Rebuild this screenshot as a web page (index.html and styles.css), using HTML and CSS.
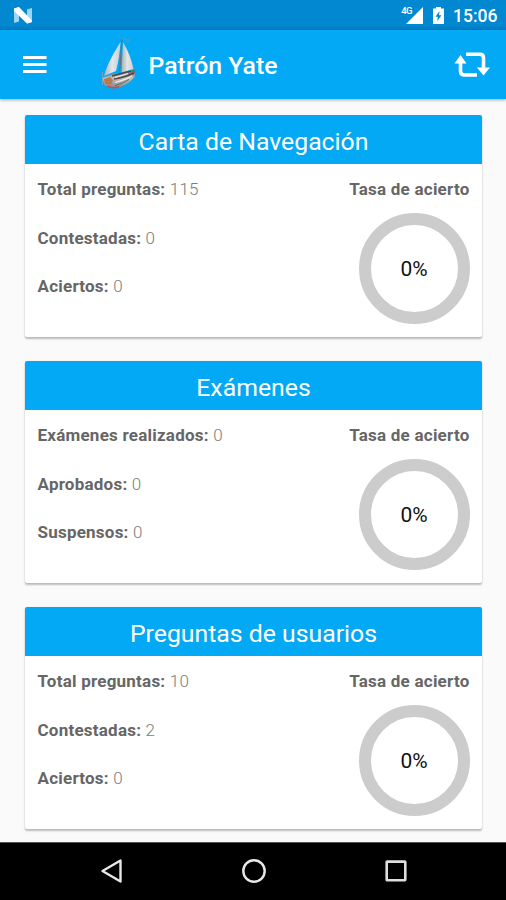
FILE: index.html
```
<!DOCTYPE html>
<html lang="es">
<head>
<meta charset="utf-8">
<title>Patrón Yate</title>
<link rel="stylesheet" href="styles.css">
</head>
<body>
<div class="screen">
  <header class="status-bar">
    <svg class="n-logo" width="20" height="17" viewBox="0 0 20 17"><path d="M1 1.500L6 0v14.500L1 16zM14 2.500L19 1v14l-5 1.500z" fill="#9fd4f4"/><path d="M1 1.500L6 0l13 13.500v1.500L14 16.500 1 4z" fill="#fff"/></svg>
    <div class="status-icons">
      <span class="network">4G</span>
      <svg class="signal" width="17" height="17" viewBox="0 0 17 17"><path d="M17 0v17H0z" fill="#fff"/></svg>
      <svg class="battery" width="11" height="17" viewBox="0 0 11 17"><path d="M3 0h5v1.500H11V17H0V1.500h3z" fill="#fff"/><path d="M6.500 4L2.500 9.700h2.300L4.300 14 8.500 8.200H6z" fill="#0288d1"/></svg>
      <span class="clock">15:06</span>
    </div>
  </header>
  <div class="app-bar">
    <svg class="menu" width="24" height="18" viewBox="0 0 24 18"><path d="M0 1.500h23.500M0 8.500h23.500M0 15.500h23.500" stroke="#fff" stroke-width="2.800"/></svg>
    <svg class="boat" width="36" height="54" viewBox="0 0 36 54">
      <defs>
        <linearGradient id="sail" x1="0" y1="0" x2="1" y2="0"><stop offset="0" stop-color="#a3b2bc"/><stop offset=".5" stop-color="#e4e7e8"/><stop offset="1" stop-color="#c8ced3"/></linearGradient>
        <linearGradient id="hull" x1="0" y1="0" x2="0" y2="1"><stop offset="0" stop-color="#5b5553"/><stop offset=".45" stop-color="#c4c1be"/><stop offset="1" stop-color="#85878c"/></linearGradient>
      </defs>
      <path d="M19.500 5C14 14 6 27 3 39l12-5q3.500-13 4.500-29z" fill="url(#sail)"/>
      <path d="M22 5q8 14 10.500 27l-12 3.500z" fill="url(#sail)"/>
      <path d="M21 2L18.500 37" stroke="#66747b" stroke-width="1.200"/>
      <path d="M21 1.500l4 1.500 3-.8v2l-4 .3" fill="none" stroke="#78919b" stroke-width=".9"/>
      <path d="M1.500 41l10-4 7 1 15-5q2 5-1 8-5 6-14 9.500-9 1.500-15-2.500z" fill="url(#hull)"/>
      <path d="M3 42l6-2 3 3-2 5-6-1z" fill="#b77852"/>
      <path d="M11 39l19-5M13 42q12-2 20-6" fill="none" stroke="#514a49" stroke-width="1.600"/>
      <path d="M14 40.500l13-4M14 45.500q12-3 17-7" fill="none" stroke="#f4f1ed" stroke-width="1.200"/>
      <path d="M14 48.500q8-2 14-6" fill="none" stroke="#6b6c72" stroke-width="1"/>
      <path d="M6 49q6 3 12 .5" fill="none" stroke="#d4494a" stroke-width="1.500"/>
      <path d="M1.500 35v13" stroke="#8aa4b2" stroke-width=".9"/>
    </svg>
    <h1 class="app-title">Patrón Yate</h1>
    <svg class="repeat" width="36" height="26" viewBox="0 0 36 26"><path d="M6.500 11v9q0 4 4 4H23M12 3.200h14q3.500 0 3.500 3.500v10" fill="none" stroke="#fff" stroke-width="3.600"/><path d="M.5 12.500L6.500 4l6 8.500zM23 16.500h13l-6.500 8z" fill="#fff"/></svg>
  </div>
  <main class="content">
    <section class="card">
      <h2 class="card-title">Carta de Navegación</h2>
      <div class="card-body">
        <div class="stats"><p><b>Total preguntas:</b> 115</p><p><b>Contestadas:</b> 0</p><p><b>Aciertos:</b> 0</p></div>
        <div class="rate"><b>Tasa de acierto</b><div class="ring">0%</div></div>
      </div>
    </section>
    <section class="card">
      <h2 class="card-title">Exámenes</h2>
      <div class="card-body">
        <div class="stats"><p><b>Exámenes realizados:</b> 0</p><p><b>Aprobados:</b> 0</p><p><b>Suspensos:</b> 0</p></div>
        <div class="rate"><b>Tasa de acierto</b><div class="ring">0%</div></div>
      </div>
    </section>
    <section class="card">
      <h2 class="card-title">Preguntas de usuarios</h2>
      <div class="card-body">
        <div class="stats"><p><b>Total preguntas:</b> 10</p><p><b>Contestadas:</b> 2</p><p><b>Aciertos:</b> 0</p></div>
        <div class="rate"><b>Tasa de acierto</b><div class="ring">0%</div></div>
      </div>
    </section>
  </main>
  <nav class="nav-bar">
    <svg width="24" height="26" viewBox="0 0 24 26"><path d="M2.500 13L20.500 2.500v21z" fill="none" stroke="#e8e8e8" stroke-width="2.400" stroke-linejoin="round"/></svg>
    <svg width="24" height="26" viewBox="0 0 24 26"><circle cx="12" cy="13" r="10.700" fill="none" stroke="#e8e8e8" stroke-width="2.400"/></svg>
    <svg width="24" height="26" viewBox="0 0 24 26"><rect x="2.700" y="3.600" width="18.600" height="18.600" rx=".5" fill="none" stroke="#dedede" stroke-width="2.600"/></svg>
  </nav>
</div>
</body>
</html>
```
FILE: styles.css
```
* { box-sizing: border-box; }
body { margin: 0; font-family: Roboto, "Liberation Sans", sans-serif; }
h1, h2, p { margin: 0; }
svg { display: block; flex: none; }
.screen { width: 506px; height: 900px; display: flex; flex-direction: column; overflow: hidden; background: #fafafa; }
.status-bar { height: 30px; flex: none; display: flex; justify-content: space-between; padding: 7px 9px 0 13px; background: linear-gradient(#0288d1 25px, #027dc0); color: #fff; }
.status-icons { display: flex; }
.network { font-size: 9.5px; line-height: 8px; font-weight: 500; margin-right: -6px; letter-spacing: -.5px; }
.battery { margin-left: 10px; }
.clock { width: 44px; margin-left: 9px; font-size: 17.500px; line-height: 18px; font-weight: 500; white-space: nowrap; }
.app-bar { height: 69px; flex: none; display: flex; align-items: center; padding: 0 16px 0 23px; background: #03a9f4; color: #fff; position: relative; box-shadow: 0 1px 3px rgba(0,0,0,.35); }
.boat { margin-left: 54px; margin-top: -1px; }
.app-title { margin-left: 11.500px; font-size: 24.800px; font-weight: 500; line-height: 30px; padding-top: 2px; }
.repeat { margin-left: auto; margin-top: -1px; }
.content { flex: 1; min-height: 0; padding: 16px 24px 0 25px; display: flex; flex-direction: column; gap: 24px; }
.card { height: 222px; flex: none; border-radius: 2px; background: #fff; box-shadow: 0 1.500px 2px rgba(0,0,0,.25), 0 0 1px rgba(0,0,0,.12); overflow: hidden; }
.card-title { height: 49px; background: #03a9f4; color: #fff; text-align: center; font-size: 24.800px; font-weight: 400; line-height: 54px; }
.card-body { display: flex; justify-content: space-between; padding: 15.400px 12.500px 0; font-size: 17px; line-height: 20px; color: #7c7c7c; letter-spacing: .23px; }
.card-body b { font-weight: 700; color: #666; }
.stats { display: flex; flex-direction: column; gap: 28.200px; }
.stats p { font-weight: 300; }
.rate { display: flex; flex-direction: column; align-items: flex-end; }
.ring { width: 111px; height: 111px; margin-top: 13.300px; border: 12.500px solid #ccc; border-radius: 50%; display: flex; align-items: center; justify-content: center; padding-top: 2px; font-size: 21px; letter-spacing: 0; color: #111; }
.nav-bar { height: 58px; flex: none; display: flex; justify-content: space-between; padding: 14.500px 98px 0 100px; background: #000; border-top: 1px solid #555; }
```
